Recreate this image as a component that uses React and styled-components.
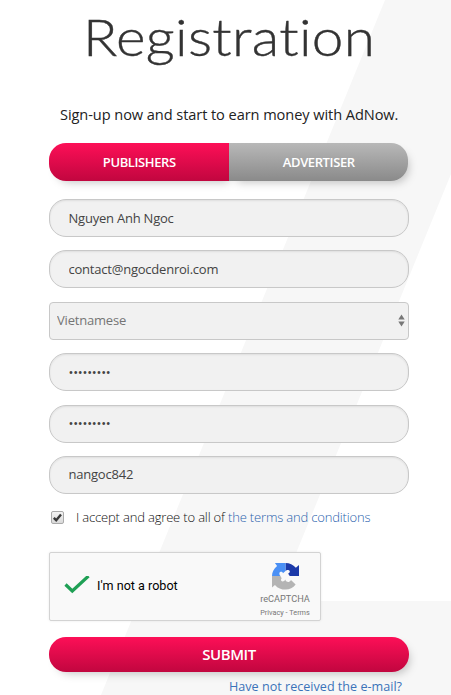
import styled, { createGlobalStyle } from "styled-components";

function App() {
  return (
    <>
      <GlobalStyle />
      <PageSt>
        <BackShape viewBox="0 0 451 695">
          <path d="M385 0H451V174L276.5 601H451V695H101Z" fill="#f7f7f7" />
        </BackShape>
        <TitleSt>Registration</TitleSt>
        <LeadSt>Sign-up now and start to earn money with AdNow.</LeadSt>
        <FormSt onSubmit={(e) => e.preventDefault()}>
          <TabsSt>
            <TabBtn type="button" $active>
              PUBLISHERS
            </TabBtn>
            <TabBtn type="button">ADVERTISER</TabBtn>
          </TabsSt>
          <FieldsSt>
            <InputSt defaultValue="Nguyen Anh Ngoc" />
            <InputSt defaultValue="contact@ngocdenroi.com" />
            <SelectBox>
              <SelectSt defaultValue="vi">
                <option value="vi">Vietnamese</option>
              </SelectSt>
              <svg width="7" height="13" viewBox="0 0 7 13" fill="#777">
                <path d="M3.5 0.5L6.7 5.5H0.3Z" />
                <path d="M3.5 12.5L6.7 7.5H0.3Z" />
              </svg>
            </SelectBox>
            <InputSt type="password" defaultValue="ngoc84200" />
            <InputSt type="password" defaultValue="ngoc84200" />
            <InputSt defaultValue="nangoc842" />
          </FieldsSt>
          <AgreeSt>
            <CheckSt>
              <svg width="11" height="11" viewBox="0 0 11 11">
                <path
                  d="M1.8 5.8L4.2 8.2L9 2.4"
                  fill="none"
                  stroke="#3a3a3a"
                  strokeWidth="2.4"
                />
              </svg>
            </CheckSt>
            <span>
              I accept and agree to all of <a href="#terms">the terms and conditions</a>
            </span>
          </AgreeSt>
          <CaptchaSt>
            <svg width="26" height="20" viewBox="0 0 26 20">
              <path
                d="M1.500 8.500L8.300 15L24.500 0"
                fill="none"
                stroke="#1fa055"
                strokeWidth="3.2"
              />
            </svg>
            <RobotText>I'm not a robot</RobotText>
            <CaptchaBrand>
              <CaptchaLogo />
              <BrandName>reCAPTCHA</BrandName>
              <BrandLinks>Privacy - Terms</BrandLinks>
            </CaptchaBrand>
          </CaptchaSt>
          <SubmitBtn>SUBMIT</SubmitBtn>
          <ResendLink href="#resend">Have not received the e-mail?</ResendLink>
        </FormSt>
      </PageSt>
    </>
  );
}

function CaptchaLogo() {
  return (
    <svg width="27" height="27" viewBox="0 0 64 64">
      <path
        fill="#1c3aa9"
        d="M64 31V5l-7.500 6.500C50 4 42 0 32 0v19c2-3 8-4 10 0 1 3-1 5-4 6l4 6Z"
      />
      <path
        fill="#4a90f5"
        d="M32 0H7l5 7C4 14 0 22 0 31h20c-3-3-4-8 0-10 4-1 5 1 6 3l6-5Z"
      />
      <path
        fill="#b4b4b4"
        d="M0 31v27l7-6C14 60 22 63 32 63c10 0 18-4 24-12L45 40c-3 5-7 6-10 4-2-1-3-3-3-5-3 5-8 6-10 3-1-2-1-4 1-6l-3-5Z"
      />
    </svg>
  );
}

export default App;

const GlobalStyle = createGlobalStyle`
  * {
    box-sizing: border-box;
  }

  body {
    margin: 0;
    overflow: hidden;
    background-color: #fff;
    color: #333;
    font-family: "Open Sans", sans-serif;
  }

  a {
    color: #3b73b9;
    text-decoration: none;
  }

  button, input, select {
    font-family: inherit;
  }
`;

const PageSt = styled.div`
  position: relative;
  z-index: 0;
  width: 451px;
  height: 695px;
  overflow: hidden;
`;

const BackShape = styled.svg`
  position: absolute;
  inset: 0;
  z-index: -1;
  width: 100%;
  height: 100%;
`;

const TitleSt = styled.h1`
  margin: 0 0 0 82.5px;
  padding-top: 6px;
  height: 102px;
  font-family: Lato, sans-serif;
  font-size: 51px;
  font-weight: 300;
  line-height: 61px;
  letter-spacing: 0.3px;
  white-space: nowrap;
  transform: scaleX(1.11);
  transform-origin: left;
  -webkit-text-stroke: 0.4px #333;
`;

const LeadSt = styled.p`
  margin: 0;
  height: 41px;
  padding-left: 60px;
  color: #222;
  font-size: 14.6px;
  line-height: 24px;
  letter-spacing: -0.08px;
  white-space: nowrap;
`;

const FormSt = styled.form`
  display: flex;
  flex-direction: column;
  width: 360px;
  margin-left: 49px;
`;

const TabsSt = styled.div`
  display: flex;
  height: 38px;
  width: 359px;
`;

const TabBtn = styled.button`
  flex: 1;
  padding: 0 0 0 1px;
  border: none;
  border-radius: ${(props) => (props.$active ? "17px 0 0 17px" : "0 17px 17px 0")};
  background: ${(props) =>
    props.$active
      ? "linear-gradient(#fd0f57, #c1063f)"
      : "linear-gradient(#b8b8b8, #8a8a8a)"};
  box-shadow: 4px 5px 10px -4px rgba(0, 0, 0, 0.25);
  color: #fff;
  font-size: 13px;
  font-weight: 600;
  letter-spacing: -0.4px;
`;

const FieldsSt = styled.div`
  display: flex;
  flex-direction: column;
  gap: 13.4px;
  margin-top: 18px;
`;

const InputSt = styled.input`
  width: 100%;
  height: 38px;
  padding: 0 19px 1px 18.5px;
  border: 1px solid #c8c8c8;
  border-radius: 17px;
  background-color: #f1f1f1;
  box-shadow: inset 0 1px 2px rgba(0, 0, 0, 0.08);
  color: #444;
  font-size: 13px;
  letter-spacing: -0.22px;
`;

const SelectBox = styled.div`
  display: flex;
  align-items: center;
  height: 38px;
  padding: 0 3px 0 7px;
  border: 1px solid #c8c8c8;
  border-radius: 4px;
  background-color: #f1f1f1;
`;

const SelectSt = styled.select`
  flex: 1;
  appearance: none;
  padding: 0 0 2px;
  border: none;
  background: none;
  color: #757575;
  font-size: 13px;
  letter-spacing: -0.2px;
`;

const AgreeSt = styled.div`
  display: flex;
  align-items: center;
  gap: 12px;
  height: 20px;
  margin-top: 13px;
  padding-left: 2px;
  color: #111;
  font-size: 13px;
  font-weight: 300;
  letter-spacing: -0.17px;
  white-space: nowrap;

  a {
    color: #2a62ad;
  }
`;

const CheckSt = styled.span`
  display: flex;
  width: 13px;
  height: 13px;
  margin-top: 1px;
  border: 1px solid #aaa;
  border-radius: 2px;
  background: linear-gradient(#f4f4f4, #d9d9d9);
`;

const CaptchaSt = styled.div`
  display: flex;
  align-items: center;
  width: 272px;
  height: 69px;
  margin-top: 25px;
  padding: 0 6px 0 14px;
  border: 1px solid #d3d3d3;
  border-radius: 2px;
  background-color: #f9f9f9;
  box-shadow: 0 0 3px rgba(0, 0, 0, 0.08);
  font-family: Roboto, sans-serif;
`;

const RobotText = styled.span`
  margin: -2px 0 0 7px;
  color: #000;
  font-size: 12.6px;
`;

const CaptchaBrand = styled.div`
  display: flex;
  flex-direction: column;
  align-items: center;
  width: 58px;
  margin: 9px 0 0 auto;
  color: #777;
  white-space: nowrap;
`;

const BrandName = styled.span`
  margin-top: 2px;
  font-size: 9.2px;
  line-height: 14px;
`;

const BrandLinks = styled.span`
  font-size: 7.3px;
  line-height: 13px;
`;

const SubmitBtn = styled.button`
  height: 35px;
  margin-top: 16px;
  border: none;
  border-radius: 17px;
  background: linear-gradient(#fd0f57, #c1063f);
  box-shadow: 4px 5px 10px -4px rgba(0, 0, 0, 0.25);
  color: #fff;
  font-size: 15px;
  font-weight: 600;
  letter-spacing: -0.4px;
`;

const ResendLink = styled.a`
  align-self: flex-end;
  margin: 6px 7px 0 0;
  font-size: 12.6px;
  line-height: 18px;
  white-space: nowrap;
`;
